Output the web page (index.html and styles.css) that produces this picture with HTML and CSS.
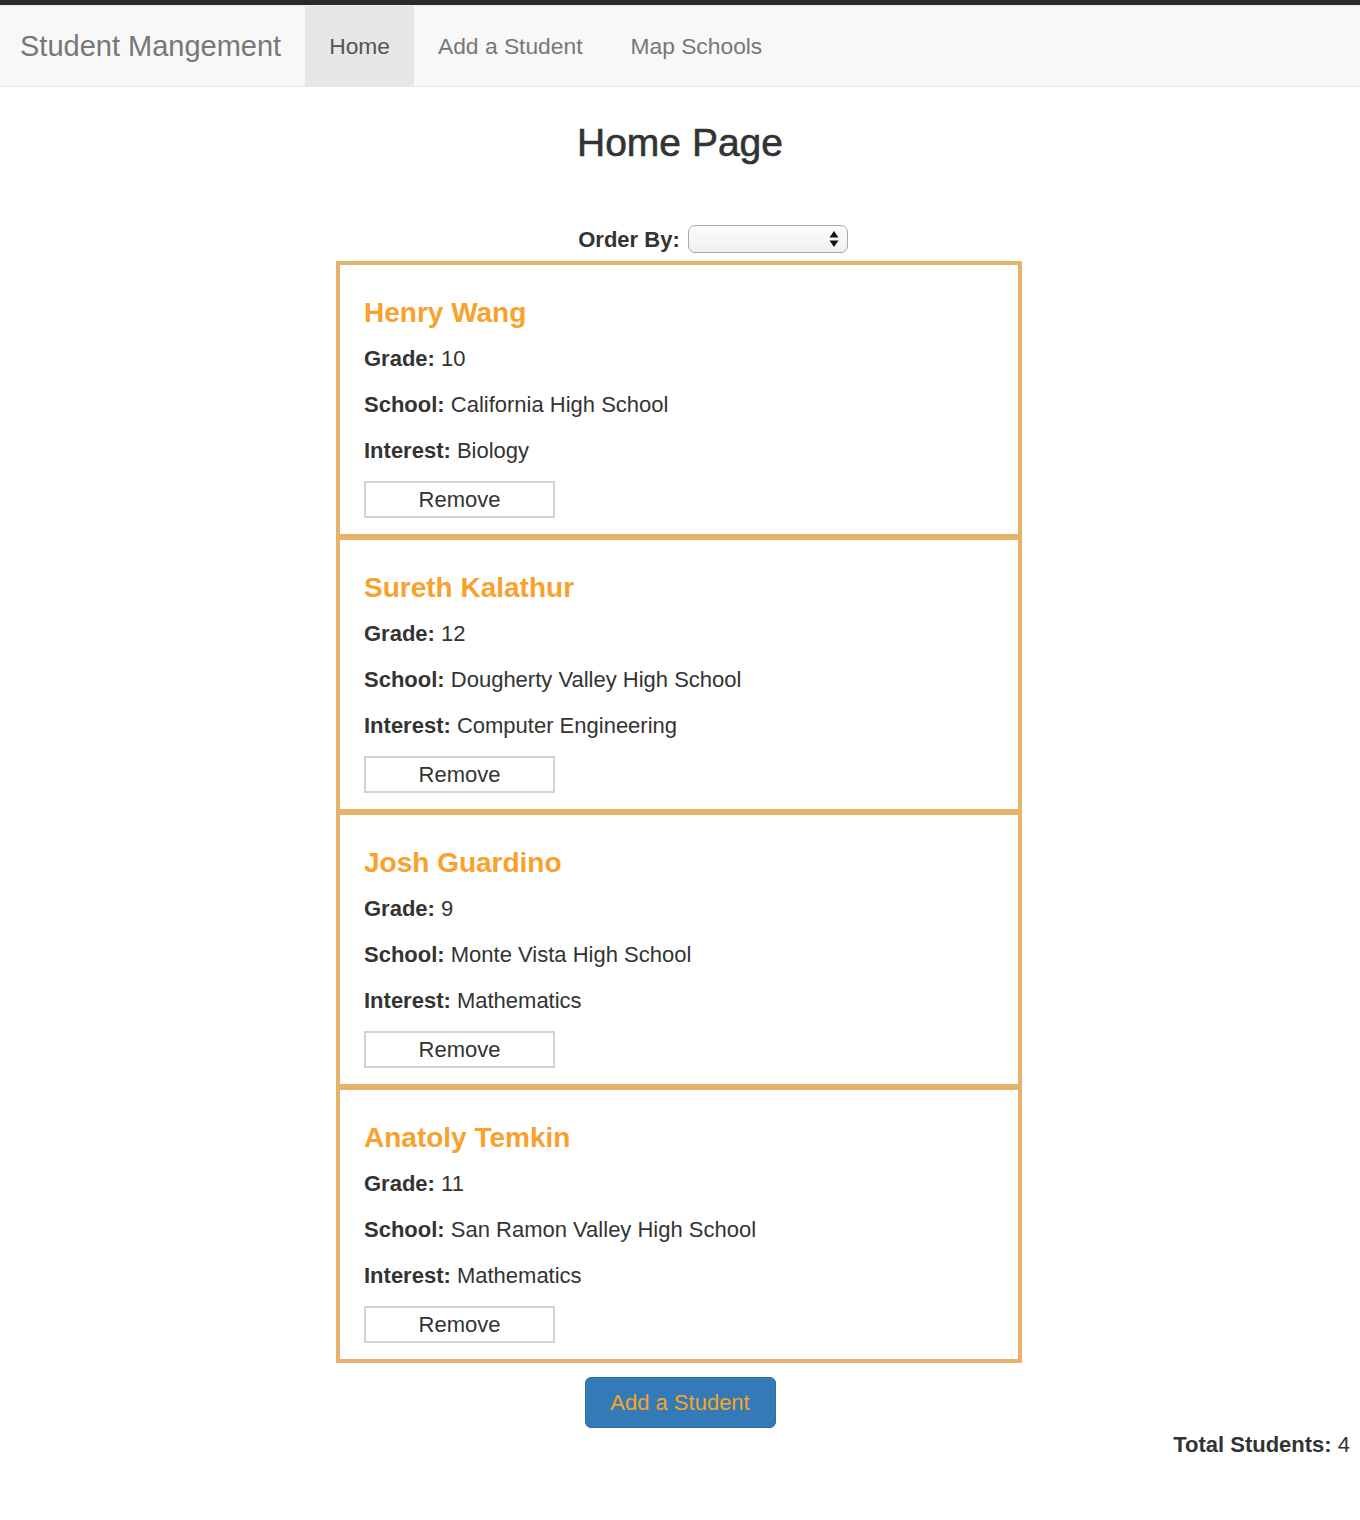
FILE: index.html
```html
<!DOCTYPE html>
<html>
<head>
<meta charset="utf-8">
<title>Student Mangement</title>
<link rel="stylesheet" href="styles.css">
</head>
<body>
<div class="topbar"></div>
<nav class="navbar">
  <a class="brand" href="#">Student Mangement</a>
  <ul class="nav">
    <li class="active"><a href="#">Home</a></li>
    <li><a href="#">Add a Student</a></li>
    <li><a href="#">Map Schools</a></li>
  </ul>
</nav>
<main class="page">
  <h1 class="title">Home Page</h1>
  <div class="order">
    <label class="order-label" for="order">Order By:</label>
    <span class="select-wrap">
      <select id="order" class="select"><option></option></select>
      <svg class="select-arrows" width="10" height="18" viewBox="0 0 10 18"><path d="M5 1 L9.5 7.5 L0.5 7.5 Z" fill="#111"/><path d="M5 17 L9.5 10.5 L0.5 10.5 Z" fill="#111"/></svg>
    </span>
  </div>
  <div class="list">
    <section class="card">
      <h3 class="name">Henry Wang</h3>
      <p class="row"><b>Grade:</b> 10</p>
      <p class="row"><b>School:</b> California High School</p>
      <p class="row"><b>Interest:</b> Biology</p>
      <button class="remove">Remove</button>
    </section>
    <section class="card">
      <h3 class="name">Sureth Kalathur</h3>
      <p class="row"><b>Grade:</b> 12</p>
      <p class="row"><b>School:</b> Dougherty Valley High School</p>
      <p class="row"><b>Interest:</b> Computer Engineering</p>
      <button class="remove">Remove</button>
    </section>
    <section class="card">
      <h3 class="name">Josh Guardino</h3>
      <p class="row"><b>Grade:</b> 9</p>
      <p class="row"><b>School:</b> Monte Vista High School</p>
      <p class="row"><b>Interest:</b> Mathematics</p>
      <button class="remove">Remove</button>
    </section>
    <section class="card">
      <h3 class="name">Anatoly Temkin</h3>
      <p class="row"><b>Grade:</b> 11</p>
      <p class="row"><b>School:</b> San Ramon Valley High School</p>
      <p class="row"><b>Interest:</b> Mathematics</p>
      <button class="remove">Remove</button>
    </section>
  </div>
  <div class="actions">
    <button class="add">Add a Student</button>
  </div>
  <div class="total"><b>Total Students:</b> 4</div>
</main>
</body>
</html>
```
FILE: styles.css
```css
* { box-sizing: border-box; }
html, body { margin: 0; padding: 0; }
body {
  font-family: "Liberation Sans", Arial, sans-serif;
  font-size: 22px;
  line-height: 31px;
  color: #333;
  background: #fff;
}
.topbar { height: 5px; background: #2b2b2b; }
.navbar {
  display: flex;
  align-items: stretch;
  height: 82px;
  background: #f8f8f8;
  border-top: 1px solid #ececec;
  border-bottom: 1px solid #e7e7e7;
}
.brand {
  display: block;
  padding: 0 24px 0 20px;
  font-size: 29px;
  line-height: 80px;
  color: #777;
  text-decoration: none;
}
.nav {
  display: flex;
  list-style: none;
  margin: 0;
  padding: 0;
}
.nav a {
  display: block;
  padding: 0 24px;
  line-height: 80px;
  font-size: 22.8px;
  color: #777;
  text-decoration: none;
}
.nav .active a { background: #e7e7e7; color: #555; }
.page { padding-top: 34px; }
.title {
  margin: 0;
  text-align: center;
  font-size: 39px;
  line-height: 43px;
  font-weight: 400;
  -webkit-text-stroke: 0.6px #333;
  color: #333;
}
.order {
  display: flex;
  justify-content: center;
  align-items: center;
  gap: 8px;
  margin-top: 60px;
  padding-left: 66px;
  height: 30px;
}
.order-label { font-weight: 700; font-size: 22px; }
.select-wrap { position: relative; display: flex; width: 160px; height: 28px; }
.select {
  display: block;
  -webkit-appearance: none;
  appearance: none;
  width: 160px;
  height: 28px;
  margin: 0;
  border: 1px solid #a9a9a9;
  border-radius: 7px;
  background: linear-gradient(#fcfcfc, #f0f0f0);
  font-family: inherit;
  font-size: 16px;
}
.select-arrows { position: absolute; right: 9px; top: 5px; }
.list {
  width: 686px;
  margin: 7px 0 0 calc(50% - 344px);
}
.card {
  border: 3px solid #e5b46a;
  border-left-width: 4px;
  border-right-width: 4px;
  padding: 0 24px 16px;
}
.card:first-child { border-top-width: 4px; }
.card:last-child { border-bottom-width: 4px; }
.name {
  margin: 32px 0 15px;
  font-size: 28px;
  line-height: 31px;
  font-weight: 700;
  color: #f8a12d;
}
.row { margin: 0 0 15px; }
.row b { font-weight: 700; }
.remove {
  display: block;
  width: 191px;
  height: 37px;
  border: 2px solid #d2d2d2;
  background: #fff;
  font-family: inherit;
  font-size: 22px;
  color: #333;
  padding: 0;
}
.actions { display: flex; justify-content: center; margin-top: 14px; }
.add {
  width: 191px;
  height: 51px;
  border: 1px solid #2e6da4;
  border-radius: 6px;
  background: #337ab7;
  color: #f7a42a;
  font-family: inherit;
  font-size: 22px;
  padding: 0;
}
.total {
  text-align: right;
  padding-right: 10px;
  margin-top: 1px;
}
```
